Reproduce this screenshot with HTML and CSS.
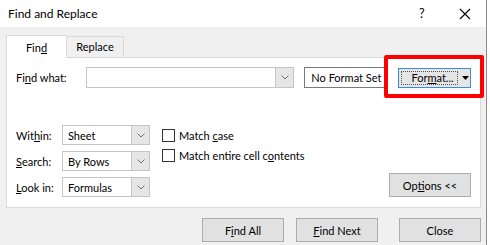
FILE: index.html
```html
<!DOCTYPE html>
<html lang="en">
<head>
    <meta charset="UTF-8">
    <meta name="viewport" content="width=device-width, initial-scale=1.0">
    <title>Find and Replace</title>
    <link rel="stylesheet" href="styles.css">
</head>
<body>
    <div class="window">
        <div class="titlebar">
            <span class="title">Find and Replace</span>
            <span class="help">?</span>
            <svg class="close-x" width="12" height="12" viewBox="0 0 12 12">
                <path d="M1 1 L11 11 M11 1 L1 11" stroke="#000" stroke-width="1.1" fill="none"/>
            </svg>
        </div>

        <div class="client">
            <div class="tabs">
                <div class="tab active"><span>Fin<u>d</u></span></div>
                <div class="tab"><span>Replace</span></div>
            </div>

            <div class="panel">
                <div class="find-row">
                    <label class="find-label">Fi<u>n</u>d what:</label>
                    <div class="combo">
                        <span class="combo-text"></span>
                        <span class="drop">
                            <svg width="8" height="5" viewBox="0 0 8 5"><path d="M0.5 0.5 L4 4 L7.5 0.5" stroke="#707070" fill="none"/></svg>
                        </span>
                    </div>
                    <div class="format-status"><span>No Format Set</span></div>
                    <div class="format-btn">
                        <span class="format-main"><span class="focus"><span>For<u>m</u>at...</span></span></span>
                        <span class="format-arrow">
                            <svg width="7" height="4" viewBox="0 0 7 4"><path d="M0 0 H7 L3.5 4 Z" fill="#000"/></svg>
                        </span>
                    </div>
                </div>

                <div class="options">
                    <div class="selects">
                        <div class="sel-row">
                            <label>Wit<u>h</u>in:</label>
                            <div class="select"><span class="sel-text">Sheet</span><span class="drop"><svg width="8" height="5" viewBox="0 0 8 5"><path d="M0.5 0.5 L4 4 L7.5 0.5" stroke="#707070" fill="none"/></svg></span></div>
                        </div>
                        <div class="sel-row">
                            <label><u>S</u>earch:</label>
                            <div class="select"><span class="sel-text">By Rows</span><span class="drop"><svg width="8" height="5" viewBox="0 0 8 5"><path d="M0.5 0.5 L4 4 L7.5 0.5" stroke="#707070" fill="none"/></svg></span></div>
                        </div>
                        <div class="sel-row">
                            <label><u>L</u>ook in:</label>
                            <div class="select"><span class="sel-text">Formulas</span><span class="drop"><svg width="8" height="5" viewBox="0 0 8 5"><path d="M0.5 0.5 L4 4 L7.5 0.5" stroke="#707070" fill="none"/></svg></span></div>
                        </div>
                    </div>

                    <div class="checks">
                        <label class="check"><span class="box"></span><span>Match <u>c</u>ase</span></label>
                        <label class="check"><span class="box"></span><span>Match entire cell c<u>o</u>ntents</span></label>
                    </div>

                    <button class="btn options-btn">Op<u>t</u>ions &lt;&lt;</button>
                </div>
            </div>

            <div class="footer">
                <button class="btn find-all">F<u>i</u>nd All</button>
                <button class="btn find-next"><u>F</u>ind Next</button>
                <button class="btn close-btn">Close</button>
            </div>
        </div>

        <div class="highlight"></div>
    </div>
</body>
</html>
```

FILE: styles.css
```css
body {
    margin: 0;
    background: #fff;
    font-family: Lato, "Noto Sans", sans-serif;
    font-size: 11px;
    color: #000;
}
.window {
    position: relative;
    width: 487px;
    height: 245px;
    box-sizing: border-box;
    border-right: 1px solid #8c8c8c;
    overflow: hidden;
}
u {
    text-decoration: underline;
    text-underline-offset: 1px;
}

/* title bar */
.titlebar {
    height: 27px;
    background: #fff;
    display: flex;
    align-items: center;
    padding-left: 8px;
}
.title {
    font-size: 12px;
    flex: 1;
}
.help {
    font-size: 12.5px;
    width: 40px;
}
.close-x {
    margin-right: 15px;
}

/* client area */
.client {
    background: #f0f0f0;
    height: 218px;
    padding: 7px 5px 0 6px;
    box-sizing: border-box;
}
.tabs {
    display: flex;
    align-items: flex-end;
    height: 23px;
}
.tab {
    width: 58px;
    height: 20px;
    box-sizing: border-box;
    border: 1px solid #d9d9d9;
    border-bottom: none;
    background: #f0f0f0;
    display: flex;
    align-items: center;
    justify-content: center;
    margin-bottom: 1px;
}
.tab.active {
    width: 60px;
    height: 23px;
    background: #fff;
    margin-bottom: -1px;
    position: relative;
    z-index: 1;
    border-right: none;
}
.panel {
    height: 151px;
    box-sizing: border-box;
    border: 1px solid #d9d9d9;
    background: #fff;
    padding: 9px 9px 0 9px;
}

/* find what row */
.find-row {
    display: flex;
    align-items: center;
    height: 21px;
}
.find-label {
    width: 70px;
}
.combo {
    width: 209px;
    height: 21px;
    box-sizing: border-box;
    border: 1px solid #c5c5c5;
    display: flex;
    justify-content: flex-end;
}
.drop {
    width: 17px;
    background: #e6e6e6;
    border-left: 1px solid #c5c5c5;
    display: flex;
    align-items: center;
    justify-content: center;
}
.format-status {
    margin-left: 10px;
    width: 83px;
    height: 21px;
    box-sizing: border-box;
    border: 1px solid #7a7a7a;
    display: flex;
    align-items: center;
    padding-left: 6px;
    white-space: nowrap;
}
.format-btn {
    margin-left: 11px;
    width: 73px;
    height: 20px;
    box-sizing: border-box;
    border: 1px solid #3c8ad8;
    background: #e5e5e5;
    display: flex;
}
.format-main {
    flex: 1;
    padding: 2px;
    display: flex;
}
.focus {
    flex: 1;
    border: 1px dotted #555;
    display: flex;
    align-items: center;
    justify-content: center;
    padding-left: 6px;
    white-space: nowrap;
}
.format-arrow {
    width: 10px;
    display: flex;
    align-items: center;
    justify-content: center;
}

/* options */
.options {
    display: flex;
    margin-top: 37px;
}
.selects {
    display: flex;
    flex-direction: column;
    gap: 6px;
}
.sel-row {
    display: flex;
    align-items: center;
    height: 20px;
}
.sel-row label {
    width: 46px;
}
.select {
    width: 88px;
    height: 20px;
    box-sizing: border-box;
    border: 1px solid #c5c5c5;
    display: flex;
}
.sel-text {
    flex: 1;
    padding-left: 5px;
    display: flex;
    align-items: center;
}
.checks {
    margin-left: 12px;
    display: flex;
    flex-direction: column;
}
.check {
    display: flex;
    align-items: center;
    height: 20px;
    white-space: nowrap;
}
.box {
    width: 13px;
    height: 13px;
    box-sizing: border-box;
    border: 1px solid #333;
    background: #fff;
    margin-right: 4px;
}
.btn {
    font-family: inherit;
    font-size: 11px;
    color: #000;
    background: #e1e1e1;
    border: 1px solid #adadad;
    height: 24px;
    width: 82px;
    padding: 0;
}
.options-btn {
    margin-left: auto;
    align-self: flex-end;
    width: 82px;
}

/* footer buttons */
.footer {
    display: flex;
    justify-content: flex-end;
    margin-top: 10px;
}
.find-all {
    margin-right: 12px;
}
.find-next {
    margin-right: 21px;
}

/* red highlight drawn over the Format button */
.highlight {
    position: absolute;
    left: 384px;
    top: 55px;
    width: 100px;
    height: 43px;
    box-sizing: border-box;
    border: 4px solid #f00;
    border-radius: 2px;
}
```
